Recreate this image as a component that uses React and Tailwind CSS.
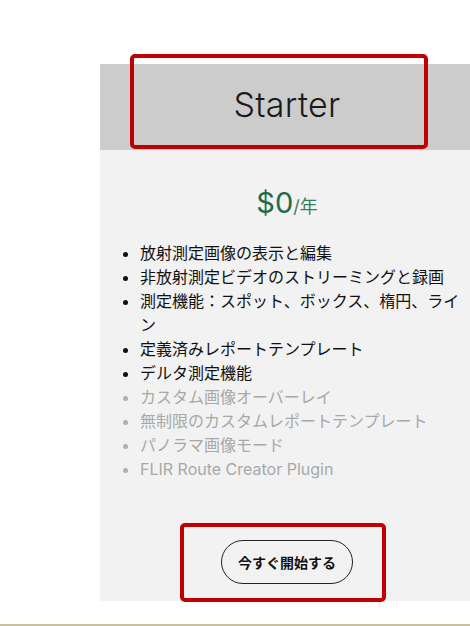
const FEATURES = [
  { text: '放射測定画像の表示と編集', on: true },
  { text: '非放射測定ビデオのストリーミングと録画', on: true },
  { text: '測定機能：スポット、ボックス、楕円、ライン', on: true },
  { text: '定義済みレポートテンプレート', on: true },
  { text: 'デルタ測定機能', on: true },
  { text: 'カスタム画像オーバーレイ', on: false },
  { text: '無制限のカスタムレポートテンプレート', on: false },
  { text: 'パノラマ画像モード', on: false },
  { text: 'FLIR Route Creator Plugin', on: false },
]

export default function App() {
  return (
    <div
      className="relative w-[470px] h-[626px] overflow-hidden bg-white border-b-2 border-[#c9c0a0]"
      style={{ fontFamily: 'Inter, "Noto Sans CJK JP", sans-serif' }}
    >
      <div className="ml-[100px] mt-[64px] w-[374px] flex flex-col">
        <div className="h-[86px] bg-[#cccccc] flex items-center justify-center pb-[6px]">
          <h2 className="text-[34px] font-light text-[#1a1a1a] tracking-[0.3px]">Starter</h2>
        </div>

        <div className="h-[451px] bg-[#f2f2f2] flex flex-col">
          <div className="pt-[35px] flex items-baseline justify-center text-[#1e6b4a]">
            <span className="text-[29px] leading-[36px]">$0</span>
            <span className="text-[18px] text-[#3b7d5f]">/年</span>
          </div>

          <ul className="mt-[20px] pl-[40px] pr-[10px] list-disc text-[16px] leading-[24px]">
            {FEATURES.map(f => (
              <li
                key={f.text}
                className={f.on ? 'text-[#111111] marker:text-[#111111]' : 'text-[#a8a8a8] marker:text-[#b0b0b0]'}
              >
                {f.text}
              </li>
            ))}
          </ul>

          <div className="mt-[59px] flex justify-center">
            <button className="h-[44px] px-[16px] rounded-full border border-[#222222] bg-transparent text-[14px] font-bold text-[#111111]">
              今すぐ開始する
            </button>
          </div>
        </div>
      </div>

      <div className="absolute left-[130px] top-[54px] w-[298px] h-[95px] border-[4px] border-[#c00000] rounded-[5px]" />
      <div className="absolute left-[180px] top-[523px] w-[206px] h-[79px] border-[4px] border-[#c00000] rounded-[5px]" />
    </div>
  )
}
